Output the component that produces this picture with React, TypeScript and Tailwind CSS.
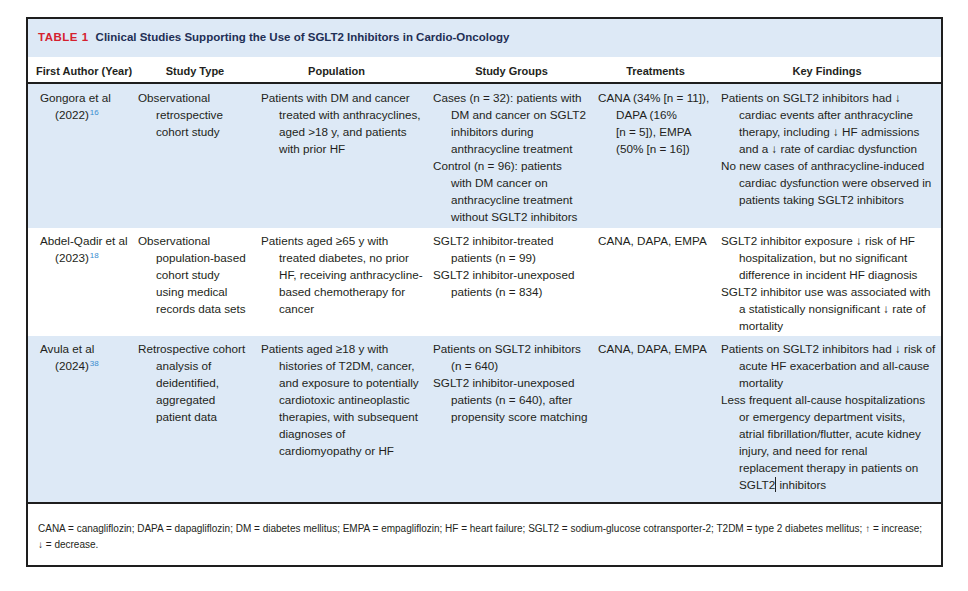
import React from "react";

type Line = React.ReactNode;
type Para = Line[];

const Sup = ({ n }: { n: string }) => (
  <sup className="text-[8px] text-[#3a8dd0] ml-[1px]">{n}</sup>
);

const Cursor = () => (
  <span className="inline-block w-px h-[15px] bg-[#222] align-middle -mt-[2px]" />
);

function Cell({ paras, indent = "pl-[18px]", pad = "pl-[4px]" }: { paras: Para[]; indent?: string; pad?: string }) {
  return (
    <div className={`${pad} whitespace-nowrap`}>
      {paras.map((lines, pi) => (
        <div key={pi}>
          {lines.map((l, i) => (
            <div key={i} className={i ? indent : ""}>
              {l}
            </div>
          ))}
        </div>
      ))}
    </div>
  );
}

const cols = "grid grid-cols-[106px_122px_173px_165px_123px_224px]";

type Row = {
  c1: Para;
  c2: Para[];
  c3: Para[];
  c4: Para[];
  c5: Para[];
  c6: Para[];
  bg: string;
  h: string;
  pt: string;
};

const rows: Row[] = [
  {
    bg: "bg-[#dde9f6]",
    h: "h-[144px]",
    pt: "pt-[5px]",
    c1: ["Gongora et al", <>(2022)<Sup n="16" /></>],
    c2: [["Observational", "retrospective", "cohort study"]],
    c3: [["Patients with DM and cancer", "treated with anthracyclines,", "aged >18 y, and patients", "with prior HF"]],
    c4: [
      ["Cases (n = 32): patients with", "DM and cancer on SGLT2", "inhibitors during", "anthracycline treatment"],
      ["Control (n = 96): patients", "with DM cancer on", "anthracycline treatment", "without SGLT2 inhibitors"],
    ],
    c5: [["CANA (34% [n = 11]),", "DAPA (16%", "[n = 5]), EMPA", "(50% [n = 16])"]],
    c6: [
      ["Patients on SGLT2 inhibitors had \u2193", "cardiac events after anthracycline", "therapy, including \u2193 HF admissions", "and a \u2193 rate of cardiac dysfunction"],
      ["No new cases of anthracycline-induced", "cardiac dysfunction were observed in", "patients taking SGLT2 inhibitors"],
    ],
  },
  {
    bg: "bg-white",
    h: "h-[108px]",
    pt: "pt-[4px]",
    c1: ["Abdel-Qadir et al", <>(2023)<Sup n="18" /></>],
    c2: [["Observational", "population-based", "cohort study", "using medical", "records data sets"]],
    c3: [["Patients aged \u226565 y with", "treated diabetes, no prior", "HF, receiving anthracycline-", "based chemotherapy for", "cancer"]],
    c4: [
      ["SGLT2 inhibitor-treated", "patients (n = 99)"],
      ["SGLT2 inhibitor-unexposed", "patients (n = 834)"],
    ],
    c5: [["CANA, DAPA, EMPA"]],
    c6: [
      ["SGLT2 inhibitor exposure \u2193 risk of HF", "hospitalization, but no significant", "difference in incident HF diagnosis"],
      ["SGLT2 inhibitor use was associated with", "a statistically nonsignificant \u2193 rate of", "mortality"],
    ],
  },
  {
    bg: "bg-[#dde9f6]",
    h: "h-[166px]",
    pt: "pt-[4px]",
    c1: ["Avula et al", <>(2024)<Sup n="38" /></>],
    c2: [["Retrospective cohort", "analysis of", "deidentified,", "aggregated", "patient data"]],
    c3: [["Patients aged \u226518 y with", "histories of T2DM, cancer,", "and exposure to potentially", "cardiotoxic antineoplastic", "therapies, with subsequent", "diagnoses of", "cardiomyopathy or HF"]],
    c4: [
      ["Patients on SGLT2 inhibitors", "(n = 640)"],
      ["SGLT2 inhibitor-unexposed", "patients (n = 640), after", "propensity score matching"],
    ],
    c5: [["CANA, DAPA, EMPA"]],
    c6: [
      ["Patients on SGLT2 inhibitors had \u2193 risk of", "acute HF exacerbation and all-cause", "mortality"],
      [
        "Less frequent all-cause hospitalizations",
        "or emergency department visits,",
        "atrial fibrillation/flutter, acute kidney",
        "injury, and need for renal",
        "replacement therapy in patients on",
        <>SGLT2<Cursor /> inhibitors</>,
      ],
    ],
  },
];

export default function App() {
  const body = { fontFamily: '"Liberation Sans", Arial, sans-serif' };
  return (
    <div className="w-[968px] h-[591px] bg-white pt-[17px] pl-[26px]" style={body}>
      <div className="w-[917px] border-2 border-[#1e1e1e] text-[#231f20]">
        {/* title */}
        <div className="h-[38px] bg-[#dde9f6] flex items-center pl-[10px] text-[11.5px] font-bold whitespace-nowrap">
          <span className="text-[#d5202e] tracking-[0.5px]">TABLE 1</span>
          <span className="ml-[7px] text-[#1f2f55]">
            Clinical Studies Supporting the Use of SGLT2 Inhibitors in Cardio-Oncology
          </span>
        </div>
        {/* header */}
        <div className={`${cols} h-[27px] border-b-2 border-[#1e1e1e] bg-white text-[11px] font-bold leading-[17px] pt-[6px] whitespace-nowrap`}>
          <div className="pl-[8px]">First Author (Year)</div>
          <div className="text-center">Study Type</div>
          <div className="text-center pr-[12px]">Population</div>
          <div className="text-center">Study Groups</div>
          <div className="text-center">Treatments</div>
          <div className="text-center pr-[4px]">Key Findings</div>
        </div>
        {/* rows */}
        {rows.map((r, i) => (
          <div key={i} className={`${cols} ${r.bg} ${r.h} ${r.pt} text-[11.7px] leading-[17px]`}>
            <Cell paras={[r.c1]} pad="pl-[12px]" indent="pl-[15px]" />
            <Cell paras={r.c2} />
            <Cell paras={r.c3} pad="pl-[5px]" />
            <Cell paras={r.c4} />
            <Cell paras={r.c5} />
            <Cell paras={r.c6} />
          </div>
        ))}
        {/* footer */}
        <div className="border-t-2 border-[#1e1e1e] h-[63px] pt-[17px] pl-[10px] text-[10px] leading-[16px] whitespace-nowrap">
          <div>
            CANA = canagliflozin; DAPA = dapagliflozin; DM = diabetes mellitus; EMPA = empagliflozin; HF = heart failure; SGLT2 = sodium-glucose cotransporter-2; T2DM = type 2 diabetes mellitus; {"\u2191"} = increase;
          </div>
          <div>{"\u2193"} = decrease.</div>
        </div>
      </div>
    </div>
  );
}
